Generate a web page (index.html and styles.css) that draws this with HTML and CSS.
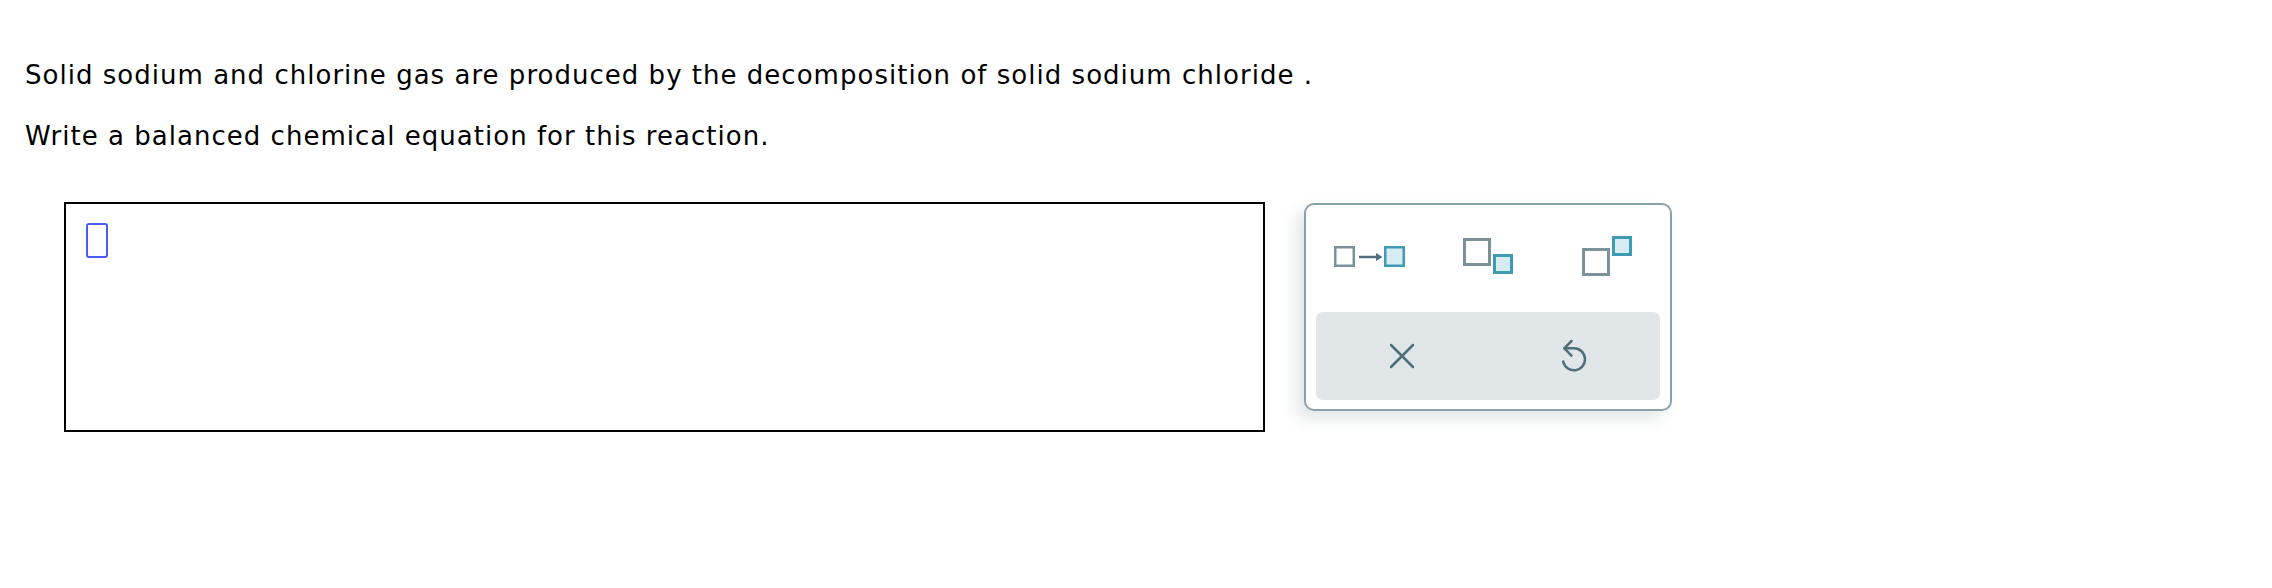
FILE: index.html
```html
<!DOCTYPE html>
<html>
<head>
<meta charset="utf-8">
<link rel="stylesheet" href="styles.css">
</head>
<body>
<div class="page">
  <p class="q">Solid sodium and chlorine gas are produced by the decomposition of solid sodium chloride .</p>
  <p class="q q2">Write a balanced chemical equation for this reaction.</p>
  <div class="work">
    <div class="answer"><span class="cursor"></span></div>
    <div class="palette">
      <div class="tools">
        <button class="tool">
          <svg width="75" height="23" viewBox="0 0 75 23">
            <rect x="2.25" y="2.25" width="18.5" height="18.5" fill="#fff" stroke="#7b929b" stroke-width="2.5"/>
            <line x1="26" y1="12" x2="45" y2="12" stroke="#4f6f7c" stroke-width="2.5"/>
            <polygon points="43,8 49.5,12 43,16" fill="#4f6f7c"/>
            <rect x="52.25" y="2.25" width="18.5" height="18.5" fill="#d4ecf2" stroke="#3f9ab4" stroke-width="2.5"/>
          </svg>
        </button>
        <button class="tool">
          <svg width="52" height="38" viewBox="0 0 52 38">
            <rect x="2.5" y="2.5" width="25" height="25" fill="#fff" stroke="#7b929b" stroke-width="3"/>
            <rect x="32.5" y="18.5" width="17" height="17" fill="#d4ecf2" stroke="#3f9ab4" stroke-width="3"/>
          </svg>
        </button>
        <button class="tool">
          <svg class="sup" width="52" height="42" viewBox="0 0 52 42">
            <rect x="2.5" y="14.5" width="25" height="25" fill="#fff" stroke="#7b929b" stroke-width="3"/>
            <rect x="32.5" y="2.5" width="17" height="17" fill="#d4ecf2" stroke="#3f9ab4" stroke-width="3"/>
          </svg>
        </button>
      </div>
      <div class="actions">
        <button class="act">
          <svg width="26" height="26" viewBox="0 0 26 26">
            <path d="M2 2 L24 24 M24 2 L2 24" stroke="#4f6f7c" stroke-width="2.5" stroke-linecap="round" fill="none"/>
          </svg>
        </button>
        <button class="act">
          <svg width="50" height="50" viewBox="0 0 50 50">
            <path d="M15.5 17.3 H25 A11 11 0 1 1 14.2 30.5" stroke="#4f6f7c" stroke-width="2.5" stroke-linecap="round" fill="none"/>
            <path d="M22.5 10 L15.3 17.3 L22.5 24.6" stroke="#4f6f7c" stroke-width="2.5" stroke-linecap="round" stroke-linejoin="round" fill="none"/>
          </svg>
        </button>
      </div>
    </div>
  </div>
</div>
</body>
</html>
```

FILE: styles.css
```css
html, body {
  margin: 0;
  padding: 0;
  background: #fff;
}

.page {
  padding: 61px 0 0 25px;
  font-family: "DejaVu Sans", Verdana, sans-serif;
  color: #000;
}

.q {
  margin: 0;
  font-size: 26px;
  line-height: 28px;
  letter-spacing: 1.02px;
}

.q2 {
  margin-top: 33px;
}

.work {
  display: flex;
  align-items: flex-start;
  margin: 52px 0 0 39px;
}

.answer {
  box-sizing: border-box;
  width: 1201px;
  height: 230px;
  border: 2px solid #000;
  padding: 19px 0 0 20px;
}

.cursor {
  display: block;
  box-sizing: border-box;
  width: 22px;
  height: 35px;
  border: 2.5px solid #4a5cf7;
  border-radius: 3px;
}

.palette {
  box-sizing: border-box;
  width: 368px;
  height: 208px;
  margin: 1px 0 0 39px;
  border: 2px solid #8aa2aa;
  border-radius: 10px;
  background: #fff;
  padding: 0 10px 9px 10px;
  box-shadow: -8px 8px 16px rgba(60, 85, 95, 0.14);
  display: flex;
  flex-direction: column;
}

.tools {
  display: grid;
  grid-template-columns: 1fr 1fr 1fr;
  height: 102px;
  margin-bottom: 5px;
}

.tool, .act {
  border: 0;
  background: transparent;
  padding: 0;
  margin: 0;
  display: flex;
  align-items: center;
  justify-content: center;
}

.tool svg, .act svg {
  display: block;
}

.tool:first-child svg {
  margin-right: 6px;
}

.sup {
  margin-left: 8px;
}

.actions {
  flex: 1;
  display: grid;
  grid-template-columns: 1fr 1fr;
  background: #e1e6e9;
  border-radius: 7px;
}
```
